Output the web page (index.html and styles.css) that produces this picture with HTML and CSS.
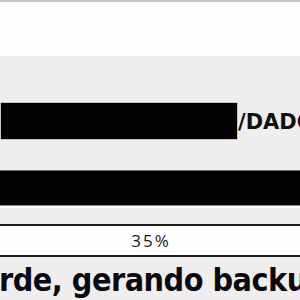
FILE: index.html
```html
<!DOCTYPE html>
<html>
<head>
<meta charset="utf-8">
<link rel="stylesheet" href="styles.css">
</head>
<body>
<div class="page">
  <div class="topbar"></div>
  <div class="content">
    <div class="path-row">
      <div class="redact"></div>
      <span class="path-text">/DADOS</span>
    </div>
    <div class="bar"></div>
    <div class="progress"><span class="pct">35%</span></div>
    <div class="message">rde, gerando backup...</div>
  </div>
</div>
</body>
</html>
```
FILE: styles.css
```css
html, body {
  margin: 0;
  padding: 0;
}
body {
  width: 300px;
  height: 300px;
  overflow: hidden;
  background: #efedee;
}
.page {
  display: flex;
  flex-direction: column;
  width: 300px;
  height: 300px;
  overflow: hidden;
}
.topbar {
  height: 54px;
  border-top: 2px solid #c6c4c6;
  background: #fefdfe;
  flex: none;
}
.content {
  display: flex;
  flex-direction: column;
}
.path-row {
  display: flex;
  align-items: center;
  margin-top: 47px;
  height: 36px;
  white-space: nowrap;
}
.redact {
  width: 236px;
  height: 36px;
  margin-left: 1px;
  background: #030103;
  box-shadow: 0 0 0 1px #c9c7c9;
  flex: none;
}
.path-text {
  font-family: "DejaVu Sans", Verdana, sans-serif;
  font-weight: bold;
  font-size: 21px;
  color: #111;
  margin-left: 1px;
  margin-top: 2px;
}
.bar {
  margin-top: 31px;
  height: 34px;
  background: #030103;
  border-top: 1px solid #6a686a;
  border-bottom: 1px solid #8a888a;
  box-shadow: 0 2px 0 #fbfbfb;
}
.progress {
  margin-top: 18px;
  height: 29px;
  background: #fefefe;
  border-top: 2px solid #1c1c1c;
  border-bottom: 2px solid #1c1c1c;
  display: flex;
  align-items: center;
  justify-content: center;
}
.pct {
  font-family: "Open Sans", "DejaVu Sans", sans-serif;
  font-size: 17px;
  color: #1a1a1a;
  letter-spacing: 2px;
  margin-left: 2px;
}
.message {
  font-family: "DejaVu Sans Condensed", "DejaVu Sans", sans-serif;
  font-weight: bold;
  font-size: 32px;
  letter-spacing: -0.5px;
  color: #0a0a12;
  white-space: nowrap;
  line-height: 40px;
  margin-top: 3px;
  margin-left: -1px;
}
```
